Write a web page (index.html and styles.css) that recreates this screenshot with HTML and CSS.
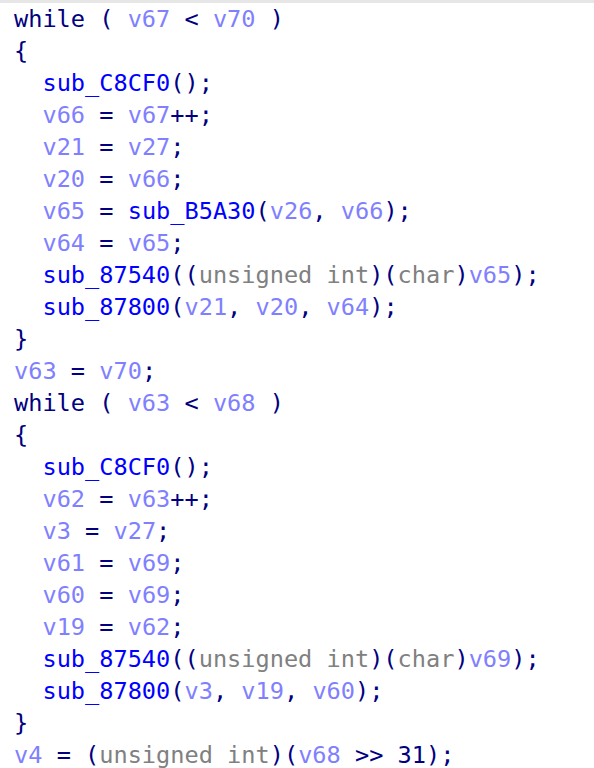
FILE: index.html
```html
<!DOCTYPE html>
<html>
<head>
<meta charset="utf-8">
<link rel="stylesheet" href="styles.css">
</head>
<body>
<div class="topbar"></div>
<div class="code">
<div class="ln"><span class="k">while</span><span class="p"> ( </span><span class="v">v67</span><span class="p"> &lt; </span><span class="v">v70</span><span class="p"> )</span></div>
<div class="ln"><span class="p">{</span></div>
<div class="ln"><span class="p">  </span><span class="f">sub_C8CF0</span><span class="p">();</span></div>
<div class="ln"><span class="p">  </span><span class="v">v66</span><span class="p"> = </span><span class="v">v67</span><span class="p">++;</span></div>
<div class="ln"><span class="p">  </span><span class="v">v21</span><span class="p"> = </span><span class="v">v27</span><span class="p">;</span></div>
<div class="ln"><span class="p">  </span><span class="v">v20</span><span class="p"> = </span><span class="v">v66</span><span class="p">;</span></div>
<div class="ln"><span class="p">  </span><span class="v">v65</span><span class="p"> = </span><span class="f">sub_B5A30</span><span class="p">(</span><span class="v">v26</span><span class="p">, </span><span class="v">v66</span><span class="p">);</span></div>
<div class="ln"><span class="p">  </span><span class="v">v64</span><span class="p"> = </span><span class="v">v65</span><span class="p">;</span></div>
<div class="ln"><span class="p">  </span><span class="f">sub_87540</span><span class="p">((</span><span class="t">unsigned int</span><span class="p">)(</span><span class="t">char</span><span class="p">)</span><span class="v">v65</span><span class="p">);</span></div>
<div class="ln"><span class="p">  </span><span class="f">sub_87800</span><span class="p">(</span><span class="v">v21</span><span class="p">, </span><span class="v">v20</span><span class="p">, </span><span class="v">v64</span><span class="p">);</span></div>
<div class="ln"><span class="p">}</span></div>
<div class="ln"><span class="v">v63</span><span class="p"> = </span><span class="v">v70</span><span class="p">;</span></div>
<div class="ln"><span class="k">while</span><span class="p"> ( </span><span class="v">v63</span><span class="p"> &lt; </span><span class="v">v68</span><span class="p"> )</span></div>
<div class="ln"><span class="p">{</span></div>
<div class="ln"><span class="p">  </span><span class="f">sub_C8CF0</span><span class="p">();</span></div>
<div class="ln"><span class="p">  </span><span class="v">v62</span><span class="p"> = </span><span class="v">v63</span><span class="p">++;</span></div>
<div class="ln"><span class="p">  </span><span class="v">v3</span><span class="p"> = </span><span class="v">v27</span><span class="p">;</span></div>
<div class="ln"><span class="p">  </span><span class="v">v61</span><span class="p"> = </span><span class="v">v69</span><span class="p">;</span></div>
<div class="ln"><span class="p">  </span><span class="v">v60</span><span class="p"> = </span><span class="v">v69</span><span class="p">;</span></div>
<div class="ln"><span class="p">  </span><span class="v">v19</span><span class="p"> = </span><span class="v">v62</span><span class="p">;</span></div>
<div class="ln"><span class="p">  </span><span class="f">sub_87540</span><span class="p">((</span><span class="t">unsigned int</span><span class="p">)(</span><span class="t">char</span><span class="p">)</span><span class="v">v69</span><span class="p">);</span></div>
<div class="ln"><span class="p">  </span><span class="f">sub_87800</span><span class="p">(</span><span class="v">v3</span><span class="p">, </span><span class="v">v19</span><span class="p">, </span><span class="v">v60</span><span class="p">);</span></div>
<div class="ln"><span class="p">}</span></div>
<div class="ln"><span class="v">v4</span><span class="p"> = (</span><span class="t">unsigned int</span><span class="p">)(</span><span class="v">v68</span><span class="p"> &gt;&gt; 31);</span></div>
</div>
</body>
</html>
```
FILE: styles.css
```css
html, body {
  margin: 0;
  padding: 0;
  background: #ffffff;
}
.topbar {
  height: 3px;
  background: #e6e6e6;
}
.code {
  padding: 0 0 0 14px;
  font-family: "DejaVu Sans Mono", monospace;
  font-size: 23.6px;
}
.ln {
  height: 32px;
  line-height: 32px;
  white-space: pre;
}
.k { color: #000080; }
.p { color: #000080; }
.v { color: #8080ff; }
.f { color: #0000ff; }
.t { color: #808080; }
```
